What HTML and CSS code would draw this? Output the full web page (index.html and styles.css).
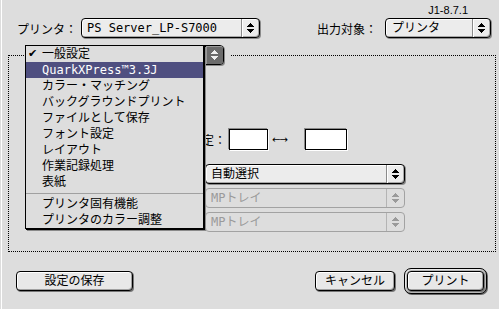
FILE: index.html
```html
<!DOCTYPE html>
<html lang="ja">
<head>
    <meta charset="UTF-8">
    <title>プリント</title>
    <link rel="stylesheet" href="styles.css">
</head>
<body>
<div class="window">
    <div class="version">J1-8.7.1</div>

    <div class="toprow">
        <span class="label">プリンタ：</span>
        <div class="popup printer">
            <span class="value">PS Server_LP-S7000</span>
            <span class="arrows"><svg width="7" height="10" viewBox="0 0 7 10"><path d="M3 0h1v1h1v1h1v1h1v1H0V3h1V2h1V1h1z M0 6h7v1H6v1H5v1H4v1H3V9H2V8H1V7H0z" fill="currentColor"/></svg></span>
        </div>
        <div class="target">
            <span class="label">出力対象：</span>
            <div class="popup output">
                <span class="value">プリンタ</span>
                <span class="arrows"><svg width="7" height="10" viewBox="0 0 7 10"><path d="M3 0h1v1h1v1h1v1h1v1H0V3h1V2h1V1h1z M0 6h7v1H6v1H5v1H4v1H3V9H2V8H1V7H0z" fill="currentColor"/></svg></span>
            </div>
        </div>
    </div>

    <fieldset class="panel">
        <legend>
            <!-- the pane popup sits under the open menu, only its arrows show -->
            <div class="popup pane pressed">
                <span class="value"></span>
                <span class="arrows"><svg width="7" height="10" viewBox="0 0 7 10"><path d="M3 0h1v1h1v1h1v1h1v1H0V3h1V2h1V1h1z M0 6h7v1H6v1H5v1H4v1H3V9H2V8H1V7H0z" fill="currentColor"/></svg></span>
            </div>
        </legend>

        <div class="range">
            <span class="label">範囲指定：</span>
            <span class="field first"></span>
            <span class="lr">←→</span>
            <span class="field second"></span>
        </div>

        <div class="popup select">
            <span class="value">自動選択</span>
            <span class="arrows"><svg width="7" height="10" viewBox="0 0 7 10"><path d="M3 0h1v1h1v1h1v1h1v1H0V3h1V2h1V1h1z M0 6h7v1H6v1H5v1H4v1H3V9H2V8H1V7H0z" fill="currentColor"/></svg></span>
        </div>
        <div class="popup select disabled">
            <span class="value">MPトレイ</span>
            <span class="arrows"><svg width="7" height="10" viewBox="0 0 7 10"><path d="M3 0h1v1h1v1h1v1h1v1H0V3h1V2h1V1h1z M0 6h7v1H6v1H5v1H4v1H3V9H2V8H1V7H0z" fill="currentColor"/></svg></span>
        </div>
        <div class="popup select disabled">
            <span class="value">MPトレイ</span>
            <span class="arrows"><svg width="7" height="10" viewBox="0 0 7 10"><path d="M3 0h1v1h1v1h1v1h1v1H0V3h1V2h1V1h1z M0 6h7v1H6v1H5v1H4v1H3V9H2V8H1V7H0z" fill="currentColor"/></svg></span>
        </div>
    </fieldset>

    <div class="buttons">
        <button class="btn save">設定の保存</button>
        <span class="spacer"></span>
        <button class="btn cancel">キャンセル</button>
        <span class="ring"><button class="btn print">プリント</button></span>
    </div>

    <!-- open pane menu -->
    <ul class="menu">
        <li class="current">一般設定</li>
        <li class="hilite">QuarkXPress™3.3J</li>
        <li>カラー・マッチング</li>
        <li>バックグラウンドプリント</li>
        <li>ファイルとして保存</li>
        <li>フォント設定</li>
        <li>レイアウト</li>
        <li>作業記録処理</li>
        <li>表紙</li>
        <li class="sep"></li>
        <li>プリンタ固有機能</li>
        <li>プリンタのカラー調整</li>
    </ul>
</div>
</body>
</html>
```

FILE: styles.css
```css
body {
    margin: 0;
    background-color: #dddddd;
    font-family: "DejaVu Sans Mono", "DejaVu Sans", "Noto Sans CJK JP", monospace;
    font-size: 12px;
    color: #000;
}
.window {
    position: relative;
    width: 499px;
    height: 309px;
    overflow: hidden;
    box-shadow: inset 1px 0 0 #dddddd, inset 2px 0 0 #ffffff;
}
.version {
    font-family: "Liberation Sans", Arial, sans-serif;
    font-size: 11px;
    line-height: 15px;
    padding: 3px 31px 0 0;
    text-align: right;
}
.toprow {
    display: flex;
    align-items: center;
    height: 20px;
}
.toprow .label {
    margin-left: 17px;
    width: 64px;
    white-space: nowrap;
}
.target {
    display: flex;
    align-items: center;
    margin-left: auto;
    margin-right: 8px;
}
.target .label {
    margin-left: 0;
    width: 68px;
}

/* popup buttons */
.popup {
    display: flex;
    height: 20px;
    box-sizing: border-box;
    border: 1px solid #000;
    border-radius: 4px;
    background-color: #ececec;
    box-shadow: inset 1px 1px 0 #fff, inset -1px -1px 0 #a8a8a8, 1px 1px 0 #8a8a8a;
}
.popup .value {
    flex: 1;
    padding-left: 5px;
    line-height: 18px;
    white-space: nowrap;
    overflow: hidden;
}
.popup .arrows {
    width: 18px;
    box-sizing: border-box;
    border-left: 1px solid #8a8a8a;
    box-shadow: inset 1px 0 0 #fff;
    display: flex;
    align-items: center;
    justify-content: center;
}
.popup.printer {
    width: 179px;
}
.popup.output {
    width: 106px;
}
.popup.output .value {
    padding-left: 6px;
}
.popup.pane {
    width: 198px;
}
.popup.pressed .arrows {
    background-color: #6c6c6c;
    color: #f0f0f0;
    border-left-color: #000;
    box-shadow: inset 1px 1px 0 #9a9a9a;
    border-radius: 0 3px 3px 0;
}
.popup.select {
    width: 200px;
    margin: 14px 0 0 196px;
}
.popup.select + .popup.select {
    margin-top: 4px;
}
.popup.disabled {
    border-color: #a2a2a2;
    background-color: #dddddd;
    color: #9a9a9a;
    box-shadow: none;
}
.popup.disabled .arrows {
    border-left-color: #b4b4b4;
    box-shadow: none;
}

/* panel */
.panel {
    margin: 7px 3px 0 8px;
    padding: 0 0 19px 0;
    border: 1px dotted #000;
    min-width: 0;
}
.panel legend {
    margin-left: 15px;
    padding: 0 6px 0 2px;
}
.range {
    display: flex;
    align-items: center;
    margin: 64px 0 0 157px;
}
.range .label {
    width: 60px;
    white-space: nowrap;
}
.field {
    height: 21px;
    box-sizing: border-box;
    background-color: #fff;
    border: 1px solid #000;
    box-shadow: -1px -1px 0 #8a8a8a, 1px 1px 0 #fff;
}
.field.first {
    width: 39px;
    margin-left: 3px;
}
.field.second {
    width: 42px;
    margin-left: 9px;
}
.lr {
    margin-left: 4px;
    width: 24px;
    font-family: "DejaVu Sans", sans-serif;
    font-size: 10px;
    letter-spacing: -1px;
}

/* bottom buttons */
.buttons {
    display: flex;
    align-items: center;
    height: 26px;
    margin-top: 16px;
    padding: 0 12px 0 16px;
}
.spacer {
    flex: 1;
}
.btn {
    height: 20px;
    box-sizing: border-box;
    padding: 0;
    border: 1px solid #000;
    border-radius: 4px;
    background-color: #e8e8e8;
    box-shadow: inset 1px 1px 0 #fff, inset -1px -1px 0 #a0a0a0, 1px 1px 0 #777;
    font-family: inherit;
    font-size: 12px;
    line-height: 18px;
    color: #000;
}
.btn.save {
    width: 117px;
}
.btn.cancel {
    width: 80px;
}
.ring {
    display: flex;
    margin-left: 9px;
    padding: 2px;
    border: 1px solid #000;
    border-radius: 7px;
    background-color: #b8b8b8;
    box-shadow: inset 1px 1px 0 #e8e8e8, 1px 1px 0 #666;
}
.btn.print {
    width: 77px;
}

/* menu */
.menu {
    position: absolute;
    left: 25px;
    top: 45px;
    width: 179px;
    box-sizing: border-box;
    margin: 0;
    padding: 0;
    list-style: none;
    background-color: #dddddd;
    border: 1px solid #000;
    box-shadow: 1px 1px 0 #000, 2px 2px 0 #8a8a8a;
}
.menu li {
    position: relative;
    height: 16px;
    line-height: 16px;
    padding-left: 16px;
    white-space: nowrap;
}
.menu li.current::before {
    content: "✔";
    position: absolute;
    left: 2px;
    font-family: "DejaVu Sans", sans-serif;
    font-size: 11px;
}
.menu li.hilite {
    background-color: #4f4f80;
    color: #fff;
}
.menu li.sep {
    height: 0;
    margin: 3px 0 2px;
    border-top: 1px solid #a0a0a0;
}
```
